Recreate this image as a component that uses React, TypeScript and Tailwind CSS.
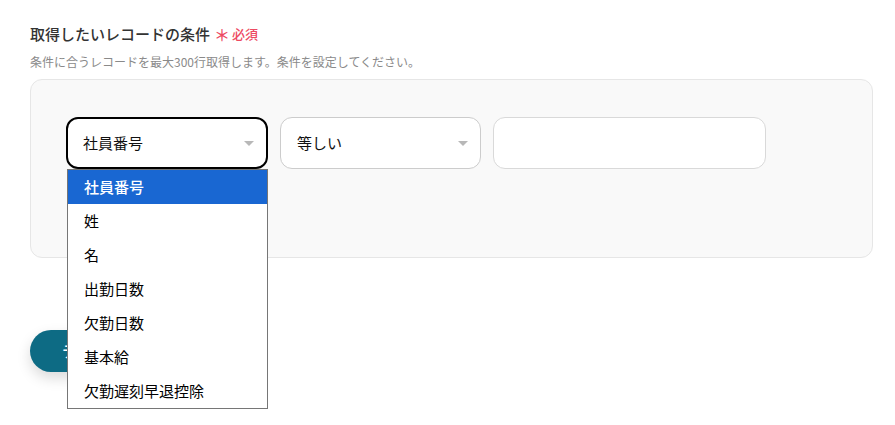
import React from "react";

const options = ["社員番号", "姓", "名", "出勤日数", "欠勤日数", "基本給", "欠勤遅刻早退控除"];

const Arrow = () => (
  <svg width="10" height="5" viewBox="0 0 10 5" className="shrink-0">
    <path d="M0 0 L10 0 L5 5 Z" fill="#b8b8b8" />
  </svg>
);

const App = () => {
  return (
    <div
      className="relative w-[895px] h-[425px] bg-white overflow-hidden"
      style={{ fontFamily: '"Noto Sans CJK JP", "Noto Sans", sans-serif' }}
    >
      <div className="pl-[30px] pr-[22px] pt-[22px]">
        <div className="flex items-center gap-[4px] h-[24px]">
          <span className="text-[15px] font-medium text-[#333333]">取得したいレコードの条件</span>
          <span className="text-[13px] font-medium text-[#ed4a62] flex items-center gap-[2px]">
            <span className="text-[16px] leading-none">＊</span>必須
          </span>
        </div>
        <p className="mt-[7px] text-[12px] text-[#8a8a8a] leading-[18px]">
          条件に合うレコードを最大300行取得します。条件を設定してください。
        </p>
        <div className="mt-[8px] h-[179px] rounded-[12px] border border-[#e6e6e6] bg-[#f9f9f9] pt-[37px] pl-[35px]">
          <div className="flex gap-[12px]">
            <div className="w-[202px] h-[52px] rounded-[12px] border-2 border-black bg-white flex items-center justify-between pl-[15px] pr-[12px]">
              <span className="text-[15px] text-[#111]">社員番号</span>
              <Arrow />
            </div>
            <div className="w-[201px] h-[52px] rounded-[12px] border border-[#cccccc] bg-white flex items-center justify-between pl-[16px] pr-[12px]">
              <span className="text-[15px] text-[#111]">等しい</span>
              <Arrow />
            </div>
            <div className="w-[273px] h-[52px] rounded-[12px] border border-[#d9d9d9] bg-white" />
          </div>
        </div>
        <div className="mt-[72px]">
          <button className="h-[42px] w-[150px] rounded-full bg-[#0d6b84] text-white text-[15px] font-medium pl-[32px] text-left shadow-[0_6px_14px_rgba(0,0,0,0.15)]">
            テスト
          </button>
        </div>
      </div>

      <div className="absolute left-[67px] top-[169px] w-[201px] border border-[#767676] bg-white">
        {options.map((o, i) => (
          <div
            key={o}
            className={
              "h-[34px] flex items-center pl-[16px] text-[15px] " +
              (i === 0 ? "bg-[#1967d2] text-white font-medium" : "text-black")
            }
          >
            {o}
          </div>
        ))}
      </div>
    </div>
  );
};

export default App;
